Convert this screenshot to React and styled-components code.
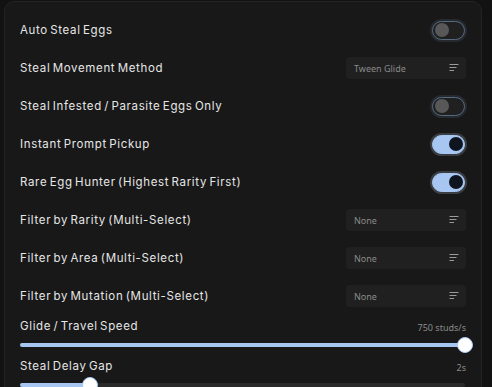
import React from "react";
import styled, { createGlobalStyle } from "styled-components";

const Global = createGlobalStyle`
  html, body { margin: 0; padding: 0; background: #121212; overflow: hidden; }
  body { font-family: Inter, "Noto Sans", sans-serif; }
`;

const Page = styled.div`
  width: 492px;
  height: 387px;
  padding: 1px 10px 0 4px;
  box-sizing: border-box;
  overflow: hidden;
`;

const Panel = styled.div`
  background: #181818;
  border: 1px solid #232323;
  border-radius: 10px;
  padding: 13px 15px 20px 15px;
  display: flex;
  flex-direction: column;
  gap: 8px;
`;

const Row = styled.div`
  height: 30px;
  display: flex;
  align-items: center;
  justify-content: space-between;
`;

const Label = styled.span`
  color: #e6e6e6;
  font-family: Inter, "Noto Sans", sans-serif;
  font-size: 11.5px;
  letter-spacing: 0.65px;
  word-spacing: -1.5px;
  line-height: 14px;
`;

const Track = styled.div`
  width: 33px;
  height: 19px;
  box-sizing: border-box;
  border-radius: 10px;
  margin-right: 1px;
  border: 1px solid ${(p) => (p.$on ? "#a7c7f2" : "#566a84")};
  background: ${(p) => (p.$on ? "#a7c7f2" : "#202020")};
  box-shadow: 0 0 0 2px ${(p) => (p.$on ? "#3a3d42" : "#262a2f")};
  display: flex;
  align-items: center;
  justify-content: ${(p) => (p.$on ? "flex-end" : "flex-start")};
  padding: 0 1px 0 2px;
`;

const Knob = styled.div`
  width: 14px;
  height: 14px;
  border-radius: 50%;
  background: ${(p) => (p.$on ? "#0e1420" : "#585858")};
`;

const Toggle = ({ on }) => (
  <Track $on={on}>
    <Knob $on={on} />
  </Track>
);

const Select = styled.div`
  width: 120px;
  height: 22px;
  box-sizing: border-box;
  background: #202020;
  border-radius: 4px;
  display: flex;
  align-items: center;
  justify-content: space-between;
  padding: 0 7px 0 8px;
`;

const SelectText = styled.span`
  color: #8a8a8a;
  font-family: "Noto Sans", "Open Sans", sans-serif;
  font-size: 9px;
`;

const MenuIcon = () => (
  <svg width="10" height="8" viewBox="0 0 10 8">
    <g stroke="#9a9a9a" strokeWidth="1" strokeLinecap="butt">
      <line x1="0.5" y1="0.5" x2="9.5" y2="0.5" />
      <line x1="0.5" y1="3.5" x2="7.5" y2="3.5" />
      <line x1="0.5" y1="6.5" x2="5" y2="6.5" />
    </g>
  </svg>
);

const Dropdown = ({ value }) => (
  <Select>
    <SelectText>{value}</SelectText>
    <MenuIcon />
  </Select>
);

const SliderBlock = styled.div`
  display: flex;
  flex-direction: column;
  gap: 10px;
  padding-bottom: 4px;
`;

const SliderHead = styled.div`
  display: flex;
  align-items: center;
  justify-content: space-between;
  height: 14px;
`;

const Value = styled.span`
  color: #8a8a8a;
  font-family: "Noto Sans", "Open Sans", sans-serif;
  font-size: 9px;
  margin-top: 2px;
`;

const Rail = styled.div`
  position: relative;
  height: 4px;
  border-radius: 2px;
  background: #2a2a2a;
  margin-right: 1px;
`;

const Fill = styled.div`
  height: 100%;
  border-radius: 2px;
  background: #a7c7f2;
`;

const Thumb = styled.div`
  position: absolute;
  top: 50%;
  width: 14px;
  height: 14px;
  border-radius: 50%;
  background: #ffffff;
  border: 1.5px solid #a7c7f2;
  transform: translate(-50%, -50%);
`;

const Slider = ({ label, value, pct }) => (
  <SliderBlock>
    <SliderHead>
      <Label>{label}</Label>
      <Value>{value}</Value>
    </SliderHead>
    <Rail>
      <Fill style={{ width: `${pct}%` }} />
      <Thumb style={{ left: `${pct}%` }} />
    </Rail>
  </SliderBlock>
);

const rows = [
  { label: "Auto Steal Eggs", type: "toggle", on: false },
  { label: "Steal Movement Method", type: "select", value: "Tween Glide" },
  { label: "Steal Infested / Parasite Eggs Only", type: "toggle", on: false },
  { label: "Instant Prompt Pickup", type: "toggle", on: true },
  { label: "Rare Egg Hunter (Highest Rarity First)", type: "toggle", on: true },
  { label: "Filter by Rarity (Multi-Select)", type: "select", value: "None" },
  { label: "Filter by Area (Multi-Select)", type: "select", value: "None" },
  { label: "Filter by Mutation (Multi-Select)", type: "select", value: "None" },
];

export default function App() {
  return (
    <Page>
      <Global />
      <Panel>
        {rows.map((r) => (
          <Row key={r.label}>
            <Label>{r.label}</Label>
            {r.type === "toggle" ? <Toggle on={r.on} /> : <Dropdown value={r.value} />}
          </Row>
        ))}
        <Slider label="Glide / Travel Speed" value="750 studs/s" pct={100} />
        <Slider label="Steal Delay Gap" value="2s" pct={15.7} />
      </Panel>
    </Page>
  );
}
